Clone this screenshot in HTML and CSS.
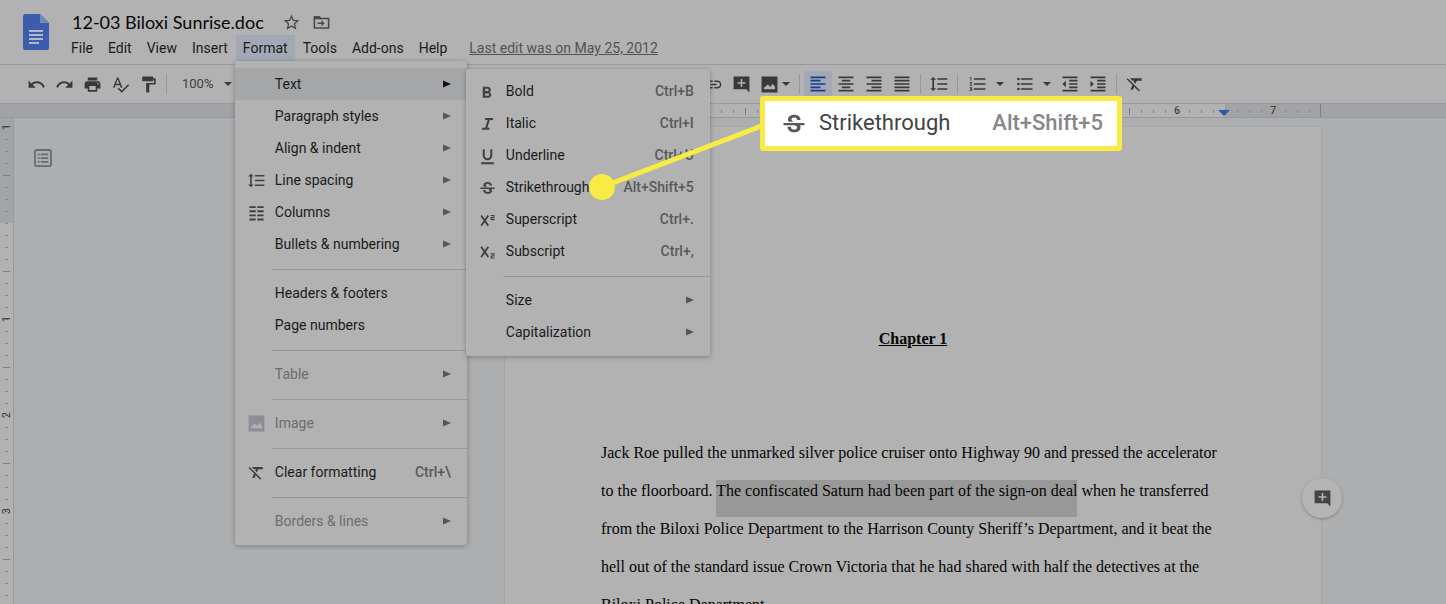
FILE: index.html
```html
<!DOCTYPE html>
<html lang="en">
<head>
<meta charset="utf-8">
<title>12-03 Biloxi Sunrise.doc</title>
<link rel="stylesheet" href="styles.css">
</head>
<body>
<svg class="sprite" aria-hidden="true">
  <symbol id="undo" viewBox="0 0 24 24"><path d="M12.5 8c-2.65 0-5.05.99-6.9 2.6L2 7v9h9l-3.62-3.62c1.39-1.16 3.16-1.88 5.12-1.88 3.54 0 6.55 2.31 7.6 5.5l2.37-.78C21.08 11.03 17.15 8 12.5 8z"/></symbol>
  <symbol id="redo" viewBox="0 0 24 24"><path d="M18.4 10.6C16.55 8.99 14.15 8 11.5 8c-4.65 0-8.58 3.03-9.96 7.22L3.9 16c1.05-3.19 4.05-5.5 7.6-5.5 1.95 0 3.73.72 5.12 1.88L13 16h9V7l-3.6 3.6z"/></symbol>
  <symbol id="print" viewBox="0 0 24 24"><path d="M19 8H5c-1.66 0-3 1.34-3 3v6h4v4h12v-4h4v-6c0-1.66-1.34-3-3-3zm-3 11H8v-5h8v5zm3-7c-.55 0-1-.45-1-1s.45-1 1-1 1 .45 1 1-.45 1-1 1zm-1-9H6v4h12V3z"/></symbol>
  <symbol id="spell" viewBox="0 0 24 24"><path d="M12.45 16h2.09L9.43 3H7.57L2.46 16h2.09l1.12-3h5.64l1.14 3zm-6.02-5L8.5 5.48 10.57 11H6.43zm15.16.59l-8.09 8.09L9.83 16l-1.41 1.41 5.09 5.09L23 13l-1.41-1.41z"/></symbol>
  <symbol id="paint" viewBox="0 0 24 24"><path d="M18 4V3c0-.55-.45-1-1-1H5c-.55 0-1 .45-1 1v4c0 .55.45 1 1 1h12c.55 0 1-.45 1-1V6h1v4H9v11c0 .55.45 1 1 1h2c.55 0 1-.45 1-1v-9h8V4h-3z"/></symbol>
  <symbol id="link" viewBox="0 0 24 24"><path d="M3.9 12c0-1.71 1.39-3.1 3.1-3.1h4V7H7c-2.76 0-5 2.24-5 5s2.24 5 5 5h4v-1.9H7c-1.71 0-3.1-1.39-3.1-3.1zM8 13h8v-2H8v2zm9-6h-4v1.9h4c1.71 0 3.1 1.39 3.1 3.1s-1.39 3.1-3.1 3.1h-4V17h4c2.76 0 5-2.24 5-5s-2.24-5-5-5z"/></symbol>
  <symbol id="comment" viewBox="0 0 24 24"><path fill-rule="evenodd" d="M2 2h20v20l-4-4H2zM11 5v4H7v2h4v4h2v-4h4V9h-4V5z"/></symbol>
  <symbol id="image" viewBox="0 0 24 24"><path fill-rule="evenodd" d="M2 2h20v20H2zM5 18h14v-3l-3-4-3 4-3-3-5 4z"/></symbol>
  <symbol id="left" viewBox="0 0 24 24"><path d="M3 3h18v2H3zM3 7h12v2H3zM3 11h18v2H3zM3 15h12v2H3zM3 19h18v2H3z"/></symbol>
  <symbol id="center" viewBox="0 0 24 24"><path d="M3 3h18v2H3zM7 7h10v2H7zM3 11h18v2H3zM7 15h10v2H7zM3 19h18v2H3z"/></symbol>
  <symbol id="right" viewBox="0 0 24 24"><path d="M3 3h18v2H3zM9 7h12v2H9zM3 11h18v2H3zM9 15h12v2H9zM3 19h18v2H3z"/></symbol>
  <symbol id="justify" viewBox="0 0 24 24"><path d="M3 3h18v2H3zM3 7h18v2H3zM3 11h18v2H3zM3 15h18v2H3zM3 19h18v2H3z"/></symbol>
  <symbol id="spacing" viewBox="0 0 24 24"><path d="M6 7h2.5L5 3.5 1.5 7H4v10H1.5L5 20.5 8.5 17H6V7zm4-2v2h12V5H10zm0 14h12v-2H10v2zm0-6h12v-2H10v2z"/></symbol>
  <symbol id="numbered" viewBox="0 0 24 24"><path d="M2 17h2v.5H3v1h1v.5H2v1h3v-4H2v1zm1-9h1V4H2v1h1v3zm-1 3h1.8L2 13.1v.9h3v-1H3.2L5 10.9V10H2v1zm5-6v2h14V5H7zm0 14h14v-2H7v2zm0-6h14v-2H7v2z"/></symbol>
  <symbol id="bulleted" viewBox="0 0 24 24"><path d="M7 5h14v2H7zM7 11h14v2H7zM7 17h14v2H7z"/><circle cx="4" cy="6" r="1.6"/><circle cx="4" cy="12" r="1.6"/><circle cx="4" cy="18" r="1.6"/></symbol>
  <symbol id="outdent" viewBox="0 0 24 24"><path d="M11 17h10v-2H11v2zm-8-5l4 4V8l-4 4zm0 9h18v-2H3v2zM3 3v2h18V3H3zm8 6h10V7H11v2zm0 4h10v-2H11v2z"/></symbol>
  <symbol id="indent" viewBox="0 0 24 24"><path d="M3 21h18v-2H3v2zM3 8v8l4-4-4-4zm8 9h10v-2H11v2zM3 3v2h18V3H3zm8 6h10V7H11v2zm0 4h10v-2H11v2z"/></symbol>
  <symbol id="clear" viewBox="0 0 24 24"><path d="M3.27 5L2 6.27l6.97 6.97L6.5 19h3l1.57-3.66L16.73 21 18 19.73 3.55 5.27 3.27 5zM6 5v.18L8.82 8h2.4l-.72 1.68 2.1 2.1L14.21 8H20V5H6z"/></symbol>
  <symbol id="columns" viewBox="0 0 24 24"><path d="M3 4h8v2.4H3zM13 4h8v2.4h-8zM3 9.2h8v2.4H3zM13 9.2h8v2.4h-8zM3 14.4h8v2.4H3zM13 14.4h8v2.4h-8zM3 19.6h8V22H3zM13 19.6h8V22h-8z"/></symbol>
  <symbol id="bold" viewBox="1 -2 24 24"><path d="M15.6 10.79c.97-.67 1.65-1.77 1.65-2.79 0-2.26-1.75-4-4-4H7v14h7.04c2.09 0 3.71-1.7 3.71-3.79 0-1.52-.86-2.82-2.15-3.42zM10 6.5h3c.83 0 1.5.67 1.5 1.5s-.67 1.5-1.5 1.5h-3v-3zm3.5 9H10v-3h3.5c.83 0 1.5.67 1.5 1.5s-.67 1.5-1.5 1.5z"/></symbol>
  <symbol id="italic" viewBox="0 -1 24 24"><path d="M9 4v2.6h3.2L9 16.4H5V19h9.5v-2.6h-2.7L15 6.6h4V4z"/></symbol>
  <symbol id="underline" viewBox="0 -1 24 24"><path d="M12 17c3.31 0 6-2.69 6-6V3h-2.5v8c0 1.93-1.57 3.5-3.5 3.5S8.5 12.93 8.5 11V3H6v8c0 3.31 2.69 6 6 6zm-8 2.5V22h16v-2.5z"/></symbol>
  <symbol id="strike" viewBox="0 -2 24 24"><path d="M6.85 7.08C6.85 4.37 9.45 3 12.24 3c1.64 0 3 .49 3.9 1.28.77.65 1.46 1.73 1.46 3.24h-3.01c0-.31-.05-.59-.15-.85-.29-.86-1.2-1.28-2.25-1.28-1.86 0-2.34 1.02-2.34 1.7 0 .48.25.88.74 1.21.38.25.77.48 1.41.7H7.39c-.21-.34-.54-.89-.54-1.92zM21 12v-2H3v2h9.62c1.15.45 1.96.75 1.96 1.97 0 1-.81 1.67-2.28 1.67-1.54 0-2.93-.54-2.93-2.51H6.4c0 .55.08 1.13.24 1.58.81 2.29 3.29 3.3 5.67 3.3 2.27 0 5.3-.89 5.3-4.05 0-.3-.01-1.16-.48-1.94H21V12z"/></symbol>
  <symbol id="super" viewBox="0 0 24 24"><path fill="none" stroke="currentColor" stroke-width="2.4" d="M4 7l9 13M13 7L4 20"/><path fill="none" stroke="currentColor" stroke-width="1.4" d="M16 7h4v2.6H16.6v2.6H21"/></symbol>
  <symbol id="sub" viewBox="0 0 24 24"><path fill="none" stroke="currentColor" stroke-width="2.4" d="M4 6l9 13M13 6L4 19"/><path fill="none" stroke="currentColor" stroke-width="1.4" d="M16 15h4v2.6H16.6v2.6H21"/></symbol>
  <symbol id="star" viewBox="0 0 24 24"><path d="M22 9.24l-7.19-.62L12 2 9.19 8.63 2 9.24l5.46 4.73L5.82 21 12 17.27 18.18 21l-1.63-7.03L22 9.24zM12 15.4l-3.76 2.27 1-4.28-3.32-2.88 4.38-.38L12 6.1l1.71 4.04 4.38.38-3.32 2.88 1 4.28L12 15.4z"/></symbol>
  <symbol id="move" viewBox="0 0 24 24"><path fill="none" stroke="currentColor" stroke-width="2" d="M3 5h6l2 2h10v12H3z"/><path d="M3 4h6.5l2 2v2H3zM12 9l4 4-4 4v-3H7v-2h5z"/></symbol>
  <symbol id="outline" viewBox="0 0 24 24"><rect x="1.3" y="1.3" width="21.4" height="21.4" rx="2" fill="none" stroke="currentColor" stroke-width="2.4"/><path d="M5 6h2.5v2.4H5zM9 6h10v2.4H9zM5 11h2.5v2.4H5zM9 11h10v2.4H9zM5 16h2.5v2.4H5zM9 16h10v2.4H9z"/></symbol>
  <symbol id="caret" viewBox="0 0 8 4"><path d="M0 0h8L4 4z"/></symbol>
  <symbol id="arrow" viewBox="0 0 8 8"><path d="M0 .5L8 4 0 7.5z"/></symbol>
</svg>

<div class="app">
  <header class="header">
    <svg class="logo" viewBox="0 0 26 36" role="img" aria-label="Docs"><path fill="#3d5cae" d="M2.5 0H17l9 9v24.500a2.500 2.500 0 0 1-2.500 2.500h-21A2.500 2.500 0 0 1 0 33.500v-31A2.500 2.500 0 0 1 2.500 0z"/><path fill="#7489bd" d="M17 0l9 9h-9z"/><path fill="#b2b8c6" d="M6 16h14v2H6zM6 20h14v2H6zM6 24h14v2H6zM6 28h10v2H6z"/></svg>
    <div class="heading">
      <div class="title-row">
        <h1 class="title">12-03 Biloxi Sunrise.doc</h1>
        <button class="title-btn" aria-label="Star"><svg class="icon"><use href="#star"/></svg></button>
        <button class="title-btn" aria-label="Move"><svg class="icon"><use href="#move"/></svg></button>
      </div>
      <nav class="menubar">
        <button class="menu-btn">File</button>
        <button class="menu-btn">Edit</button>
        <button class="menu-btn">View</button>
        <button class="menu-btn">Insert</button>
        <div class="menu-host">
          <button class="menu-btn open" aria-expanded="true">Format</button>
          <div class="menu format-menu">
            <div class="sub-host">
              <button class="item active"><span class="label">Text</span><svg class="arrow"><use href="#arrow"/></svg></button>
              <div class="menu text-menu">
                <button class="item"><svg class="icon item-icon"><use href="#bold"/></svg><span class="label">Bold</span><span class="keys">Ctrl+B</span></button>
                <button class="item"><svg class="icon item-icon"><use href="#italic"/></svg><span class="label">Italic</span><span class="keys">Ctrl+I</span></button>
                <button class="item"><svg class="icon item-icon"><use href="#underline"/></svg><span class="label">Underline</span><span class="keys">Ctrl+U</span></button>
                <button class="item"><svg class="icon item-icon"><use href="#strike"/></svg><span class="label">Strikethrough</span><span class="keys">Alt+Shift+5</span></button>
                <button class="item"><svg class="icon item-icon"><use href="#super"/></svg><span class="label">Superscript</span><span class="keys">Ctrl+.</span></button>
                <button class="item"><svg class="icon item-icon"><use href="#sub"/></svg><span class="label">Subscript</span><span class="keys">Ctrl+,</span></button>
                <hr class="rule">
                <button class="item"><span class="label">Size</span><svg class="arrow"><use href="#arrow"/></svg></button>
                <button class="item"><span class="label">Capitalization</span><svg class="arrow"><use href="#arrow"/></svg></button>
              </div>
            </div>
            <button class="item"><span class="label">Paragraph styles</span><svg class="arrow"><use href="#arrow"/></svg></button>
            <button class="item"><span class="label">Align &amp; indent</span><svg class="arrow"><use href="#arrow"/></svg></button>
            <button class="item"><svg class="icon item-icon"><use href="#spacing"/></svg><span class="label">Line spacing</span><svg class="arrow"><use href="#arrow"/></svg></button>
            <button class="item"><svg class="icon item-icon"><use href="#columns"/></svg><span class="label">Columns</span><svg class="arrow"><use href="#arrow"/></svg></button>
            <button class="item"><span class="label">Bullets &amp; numbering</span><svg class="arrow"><use href="#arrow"/></svg></button>
            <hr class="rule">
            <button class="item"><span class="label">Headers &amp; footers</span></button>
            <button class="item"><span class="label">Page numbers</span></button>
            <hr class="rule">
            <button class="item" disabled><span class="label">Table</span><svg class="arrow"><use href="#arrow"/></svg></button>
            <hr class="rule">
            <button class="item" disabled><svg class="icon item-icon"><use href="#image"/></svg><span class="label">Image</span><svg class="arrow"><use href="#arrow"/></svg></button>
            <hr class="rule">
            <button class="item"><svg class="icon item-icon"><use href="#clear"/></svg><span class="label">Clear formatting</span><span class="keys">Ctrl+\</span></button>
            <hr class="rule">
            <button class="item" disabled><span class="label">Borders &amp; lines</span><svg class="arrow"><use href="#arrow"/></svg></button>
          </div>
        </div>
        <button class="menu-btn">Tools</button>
        <button class="menu-btn">Add-ons</button>
        <button class="menu-btn">Help</button>
        <a class="last-edit" href="#">Last edit was on May 25, 2012</a>
      </nav>
    </div>
  </header>

  <div class="toolbar" role="toolbar">
    <button class="tool" aria-label="Undo"><svg class="icon"><use href="#undo"/></svg></button>
    <button class="tool" aria-label="Redo"><svg class="icon"><use href="#redo"/></svg></button>
    <button class="tool" aria-label="Print"><svg class="icon"><use href="#print"/></svg></button>
    <button class="tool" aria-label="Spelling"><svg class="icon"><use href="#spell"/></svg></button>
    <button class="tool" aria-label="Paint format"><svg class="icon"><use href="#paint"/></svg></button>
    <span class="divider"></span>
    <label class="zoom"><select class="zoom-select" aria-label="Zoom"><option>100%</option></select><svg class="caret"><use href="#caret"/></svg></label>
    <span class="tool-gap"></span>
    <button class="tool" aria-label="Insert link"><svg class="icon"><use href="#link"/></svg></button>
    <button class="tool" aria-label="Add comment"><svg class="icon"><use href="#comment"/></svg></button>
    <button class="tool insert-image" aria-label="Insert image"><svg class="icon"><use href="#image"/></svg><svg class="caret"><use href="#caret"/></svg></button>
    <span class="divider"></span>
    <button class="tool selected" aria-label="Left align"><svg class="icon large"><use href="#left"/></svg></button>
    <button class="tool" aria-label="Center align"><svg class="icon large"><use href="#center"/></svg></button>
    <button class="tool" aria-label="Right align"><svg class="icon large"><use href="#right"/></svg></button>
    <button class="tool" aria-label="Justify"><svg class="icon large"><use href="#justify"/></svg></button>
    <span class="divider"></span>
    <button class="tool" aria-label="Line spacing"><svg class="icon large"><use href="#spacing"/></svg></button>
    <span class="divider"></span>
    <button class="tool list" aria-label="Numbered list"><svg class="icon large"><use href="#numbered"/></svg><svg class="caret"><use href="#caret"/></svg></button>
    <button class="tool list" aria-label="Bulleted list"><svg class="icon large"><use href="#bulleted"/></svg><svg class="caret"><use href="#caret"/></svg></button>
    <button class="tool" aria-label="Decrease indent"><svg class="icon large"><use href="#outdent"/></svg></button>
    <button class="tool" aria-label="Increase indent"><svg class="icon large"><use href="#indent"/></svg></button>
    <span class="divider"></span>
    <button class="tool" aria-label="Clear formatting"><svg class="icon large"><use href="#clear"/></svg></button>
  </div>

  <div class="ruler">
    <div class="ruler-track">
      <span class="half-cell"></span><span class="cell"></span><span class="cell"></span><span class="cell"></span><span class="cell"></span><span class="cell"></span><span class="cell"></span><span class="cell">6</span><span class="cell">7</span>
      <svg class="marker" viewBox="0 0 12 6" aria-hidden="true"><path d="M0 0h12L6 6z"/></svg>
    </div>
  </div>

  <div class="workspace">
    <div class="side-ruler">
      <div class="side-track">
        <span class="side-cell margin">1</span><span class="side-cell margin-end"></span><span class="side-cell">1</span><span class="side-cell">2</span><span class="side-cell">3</span><span class="side-cell"></span>
      </div>
    </div>
    <main class="canvas">
      <aside class="outline"><button class="outline-btn" aria-label="Show outline"><svg class="icon"><use href="#outline"/></svg></button></aside>
      <article class="page">
        <h2 class="chapter">Chapter 1</h2>
        <p class="body-text">Jack Roe pulled the unmarked silver police cruiser onto Highway 90 and pressed the accelerator to the floorboard. <span class="selection">The confiscated Saturn had been part of the sign-on deal</span> when he transferred from the Biloxi Police Department to the Harrison County Sheriff’s Department, and it beat the hell out of the standard issue Crown Victoria that he had shared with half the detectives at the Biloxi Police Department.</p>
        <button class="add-comment" aria-label="Add comment"><svg class="icon"><use href="#comment"/></svg></button>
      </article>
    </main>
  </div>

  <svg class="connector" viewBox="0 0 180 90" aria-hidden="true"><path d="M14 74L176 12" stroke="#f8ec44" stroke-width="5"/><circle cx="14" cy="74" r="13" fill="#f8ec44"/></svg>
  <div class="callout"><svg class="icon"><use href="#strike"/></svg><span class="callout-label">Strikethrough</span><span class="callout-keys">Alt+Shift+5</span></div>
</div>
</body>
</html>
```
FILE: styles.css
```css
* { box-sizing: border-box; }
body { margin: 0; background: #b2b2b2; color: #1a1b1c; font: 14px/20px Roboto, "Noto Sans", sans-serif; }
button { display: flex; align-items: center; margin: 0; padding: 0; border: 0; background: none; color: inherit; font: inherit; text-align: left; }
.sprite { position: absolute; width: 0; height: 0; }
.app { position: relative; display: flex; flex-direction: column; height: 100vh; overflow: hidden; }
.icon { flex: none; display: block; width: 19px; height: 19px; fill: currentColor; }
.icon.large { width: 20px; height: 20px; }
.caret { flex: none; width: 8px; height: 4px; fill: currentColor; }

/* header */
.header { display: flex; flex: none; gap: 15px; height: 65px; padding: 10px 23px 0; border-bottom: 1px solid #999a9b; }
.logo { flex: none; width: 26px; height: 36px; margin-top: 4px; }
.title-row { display: flex; align-items: center; gap: 11px; height: 24px; margin-bottom: 1px; padding-left: 8px; }
.title { margin: 0 7px 0 0; color: #080808; font: 400 18px/24px Lato, "Open Sans", sans-serif; white-space: nowrap; }
.title-btn { color: #48494b; }
.menubar { display: flex; align-items: center; gap: 1px; height: 26px; }
.menu-btn { height: 26px; padding: 0 7px; white-space: nowrap; }
.menu-btn.open { background: #a2a9b4; }
.last-edit { margin-left: 14px; color: #505254; white-space: nowrap; }

/* menus */
.menu-host, .sub-host { position: relative; }
.menu { position: absolute; z-index: 5; background: #b2b2b2; border-radius: 3px; box-shadow: 0 1px 5px rgba(0, 0, 0, .3); }
.format-menu { top: 26px; left: -1px; width: 232px; padding: 7px 0 8px; }
.text-menu { top: 1px; left: 231px; width: 244px; padding: 6px 0 8px; }
.item { position: relative; width: 100%; height: 32px; padding: 0 16px 0 40px; white-space: nowrap; }
.item-icon { position: absolute; left: 12px; color: #3f4042; }
.label { flex: 1; }
.keys { color: #57595b; font-weight: 500; }
.arrow { width: 8px; height: 8px; fill: #555; }
.item.active { background: #a5a6a8; }
.item.active .arrow { fill: #111; }
.item:disabled { color: #6c6d6f; }
.item:disabled .item-icon { color: #8d8e93; }
.rule { height: 1px; margin: 9px 0 7px 37px; border: 0; background: #98999b; }

/* toolbar */
.toolbar { display: flex; flex: none; align-items: center; height: 39px; padding: 0 22px; border-bottom: 1px solid #999a9b; color: #38393b; }
.tool { flex: none; justify-content: center; width: 28px; height: 26px; border-radius: 2px; }
.tool.insert-image { gap: 3px; width: 40px; }
.tool.list { gap: 8px; width: 47px; }
.tool.selected { background: #a2a9b4; color: #173f91; }
.divider { flex: none; width: 1px; height: 20px; margin: 0 4px; background: #98999b; }
.zoom { display: flex; flex: none; align-items: center; width: 50px; margin-left: 11px; }
.zoom-select { flex: 1; min-width: 0; padding: 0; border: 0; background: none; color: #3c3d3f; appearance: none; font: 13px/20px Roboto, sans-serif; }
.tool-gap { flex: none; width: 467px; }

/* rulers */
.ruler { display: grid; flex: none; grid-template-columns: 505fr 816px 125fr; height: 14px; border-bottom: 1px solid #98999b; background: #a1a3a6; }
.ruler-track { position: relative; display: flex; grid-column: 2; border-right: 1px solid #808183; background: linear-gradient(#b2b2b2, #b2b2b2) 96px 0 / 624px 100% no-repeat; }
.cell, .half-cell { flex: none; height: 13px; background: linear-gradient(#7d7e80, #7d7e80) 0 4px / 1px 7px no-repeat, repeating-linear-gradient(90deg, #858688 0 1px, transparent 1px 12px) 0 6px / 100% 3px no-repeat; color: #333; font: 11px/13px Roboto, sans-serif; text-align: center; }
.half-cell { width: 48px; }
.cell { width: 96px; }
.marker { position: absolute; top: 6px; left: 713px; width: 12px; height: 6px; fill: #2f58a8; }
.workspace { display: flex; flex: 1; min-height: 0; background: #adaeb0; }
.side-ruler { flex: none; width: 14px; overflow: hidden; border-right: 1px solid #98999b; background: #b2b2b2; }
.side-track { display: flex; flex-direction: column; margin-top: -39px; }
.side-cell { display: flex; flex: none; align-items: center; justify-content: center; height: 96px; background: linear-gradient(#7d7e80, #7d7e80) 3px 0 / 7px 1px no-repeat, repeating-linear-gradient(#858688 0 1px, transparent 1px 12px) 5px 0 / 3px 100% no-repeat; color: #333; font: 11px/13px Roboto, sans-serif; writing-mode: sideways-lr; }
.side-cell.margin { background-color: #a1a5aa; }
.side-cell.margin-end { background: linear-gradient(#7d7e80, #7d7e80) 3px 0 / 7px 1px no-repeat, repeating-linear-gradient(#858688 0 1px, transparent 1px 12px) 5px 0 / 3px 100% no-repeat, linear-gradient(#a1a5aa 50%, transparent 50%); }

/* document */
.canvas { display: grid; flex: 1; grid-template-columns: 491fr 816px 125fr; min-width: 0; padding-top: 9px; overflow: hidden; }
.outline { padding: 22px 20px; color: #6a6b6d; }
.outline-btn .icon { width: 18px; height: 18px; }
.page { position: relative; padding: 193px 96px 0; background: #b2b2b2; box-shadow: 0 0 0 1px #a5a6a9; color: #050505; font: 16px/38px "Liberation Serif", serif; }
.chapter { margin: 0 0 76px; font-size: 16px; font-weight: 700; line-height: 38px; text-align: center; text-decoration: underline; }
.body-text { margin: 0; }
.selection { padding: 2px 0 18px; background: #989898; }
.add-comment { position: absolute; top: 351px; right: -21px; justify-content: center; width: 40px; height: 40px; border-radius: 50%; background: #b4b4b4; box-shadow: 0 1px 3px rgba(0, 0, 0, .25); color: #434446; }

/* highlighted shortcut */
.connector { position: absolute; z-index: 6; top: 113px; left: 588px; width: 180px; height: 90px; fill: none; }
.callout { position: absolute; z-index: 7; top: 96px; left: 760px; display: flex; align-items: center; width: 362px; height: 55px; padding: 0 14px 2px 15px; border: 5px solid #f8ec44; border-radius: 3px; background: #fff; color: #414346; font-size: 22px; line-height: 28px; white-space: nowrap; }
.callout .icon { width: 28px; height: 28px; color: #55575a; }
.callout-label { flex: 1; margin-left: 11px; }
.callout-keys { color: #85878a; font-weight: 500; }
```
